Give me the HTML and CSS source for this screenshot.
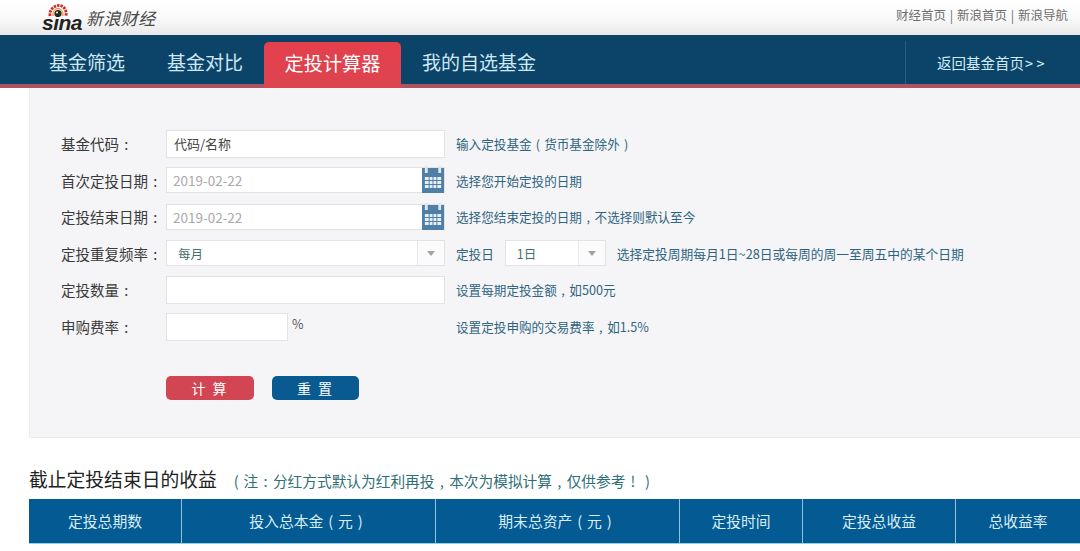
FILE: index.html
```html
<!DOCTYPE html>
<html lang="zh">
<head>
<meta charset="utf-8">
<title>定投计算器</title>
<link rel="stylesheet" href="styles.css">
</head>
<body>
<header class="top">
  <div class="brand">
    <span class="logo">
      <svg class="logo-eye" width="24" height="16" viewBox="0 0 24 16">
        <path d="M3 12 C2 5 8 1.500 12 1.500 C16 1.500 20 5 19 12" fill="none" stroke="#d8232a" stroke-width="2.800" stroke-dasharray="2.400 1"/>
        <path d="M6 12 C5.500 7 8 4.500 11 4.500 C14 4.500 16.500 7 16 12" fill="#f2d9a8" stroke="#e08a2a" stroke-width="1"/>
        <circle cx="11" cy="9.500" r="3.500" fill="#2a2a2a"/>
        <circle cx="10" cy="8.500" r="1" fill="#fff"/>
      </svg>
      <span class="logo-word">sina</span>
    </span>
    <span class="brand-name">新浪财经</span>
  </div>
  <nav class="top-links">财经首页 | 新浪首页 | 新浪导航</nav>
</header>

<nav class="nav">
  <a class="tab">基金筛选</a>
  <a class="tab">基金对比</a>
  <a class="tab active">定投计算器</a>
  <a class="tab">我的自选基金</a>
  <a class="back">返回基金首页<span class="back-arrows">&gt;&gt;</span></a>
</nav>

<main>
  <section class="panel">
    <div class="row">
      <label class="label">基金代码<span class="pc">:</span></label>
      <div class="control wide"><span class="value dark">代码/名称</span></div>
      <p class="hint">输入定投基金<span class="pc">(</span>货币基金除外<span class="pc">)</span></p>
    </div>
    <div class="row">
      <label class="label">首次定投日期<span class="pc">:</span></label>
      <div class="control wide date short">
        <span class="value muted">2019-02-22</span>
        <svg class="cal" width="22" height="27" viewBox="0 0 23 27" preserveAspectRatio="none">
          <rect x="0" y="2" width="23" height="25" fill="#4f7ea6"/>
          <rect x="3" y="0" width="3" height="7" fill="#dfe6ec"/>
          <rect x="17" y="0" width="3" height="7" fill="#dfe6ec"/>
          <g fill="#e6edf3">
            <rect x="3" y="11" width="4" height="3"/><rect x="8" y="11" width="3" height="3"/><rect x="12" y="11" width="3" height="3"/><rect x="16" y="11" width="4" height="3"/>
            <rect x="3" y="15" width="4" height="3"/><rect x="8" y="15" width="3" height="3"/><rect x="12" y="15" width="3" height="3"/><rect x="16" y="15" width="4" height="3"/>
            <rect x="3" y="19" width="4" height="3"/><rect x="8" y="19" width="3" height="3"/><rect x="12" y="19" width="3" height="3"/><rect x="16" y="19" width="4" height="3"/>
          </g>
        </svg>
      </div>
      <p class="hint">选择您开始定投的日期</p>
    </div>
    <div class="row">
      <label class="label">定投结束日期<span class="pc">:</span></label>
      <div class="control wide date short">
        <span class="value muted">2019-02-22</span>
        <svg class="cal" width="22" height="27" viewBox="0 0 23 27" preserveAspectRatio="none">
          <rect x="0" y="2" width="23" height="25" fill="#4f7ea6"/>
          <rect x="3" y="0" width="3" height="7" fill="#dfe6ec"/>
          <rect x="17" y="0" width="3" height="7" fill="#dfe6ec"/>
          <g fill="#e6edf3">
            <rect x="3" y="11" width="4" height="3"/><rect x="8" y="11" width="3" height="3"/><rect x="12" y="11" width="3" height="3"/><rect x="16" y="11" width="4" height="3"/>
            <rect x="3" y="15" width="4" height="3"/><rect x="8" y="15" width="3" height="3"/><rect x="12" y="15" width="3" height="3"/><rect x="16" y="15" width="4" height="3"/>
            <rect x="3" y="19" width="4" height="3"/><rect x="8" y="19" width="3" height="3"/><rect x="12" y="19" width="3" height="3"/><rect x="16" y="19" width="4" height="3"/>
          </g>
        </svg>
      </div>
      <p class="hint">选择您结束定投的日期<span class="pc">,</span>不选择则默认至今</p>
    </div>
    <div class="row">
      <label class="label">定投重复频率<span class="pc">:</span></label>
      <div class="control wide select short">
        <span class="value teal pad-more">每月</span>
        <span class="caret-box"><i class="caret"></i></span>
      </div>
      <p class="hint">定投日</p>
      <div class="control day select short">
        <span class="value teal pad-more">1日</span>
        <span class="caret-box"><i class="caret"></i></span>
      </div>
      <p class="hint long">选择定投周期每月1日~28日或每周的周一至周五中的某个日期</p>
    </div>
    <div class="row">
      <label class="label">定投数量<span class="pc">:</span></label>
      <div class="control wide"></div>
      <p class="hint">设置每期定投金额<span class="pc">,</span>如500元</p>
    </div>
    <div class="row">
      <label class="label">申购费率<span class="pc">:</span></label>
      <div class="control small"></div>
      <span class="percent">%</span>
      <p class="hint rate-hint">设置定投申购的交易费率<span class="pc">,</span>如1.5%</p>
    </div>
    <div class="actions">
      <button class="btn red">计 算</button>
      <button class="btn blue">重 置</button>
    </div>
  </section>

  <section class="result">
    <h2 class="result-title">截止定投结束日的收益<span class="note"><span class="pc">(</span>注<span class="pc">:</span>分红方式默认为红利再投<span class="pc">,</span>本次为模拟计算<span class="pc">,</span>仅供参考<span class="pc">!</span><span class="pc">)</span></span></h2>
    <div class="thead">
      <div class="th">定投总期数</div>
      <div class="th">投入总本金<span class="pc">(</span>元<span class="pc">)</span></div>
      <div class="th">期末总资产<span class="pc">(</span>元<span class="pc">)</span></div>
      <div class="th">定投时间</div>
      <div class="th">定投总收益</div>
      <div class="th">总收益率</div>
    </div>
  </section>
</main>
</body>
</html>
```
FILE: styles.css
```css
* { box-sizing: border-box; }
html, body { margin: 0; padding: 0; height: 100%; overflow: hidden; background: #fff; }
body { font-family: "Noto Sans CJK SC", "Liberation Sans", sans-serif; color: #333; }

.pc { display: inline-block; width: 1em; text-align: center; }

.top {
  height: 35px;
  display: flex;
  align-items: center;
  justify-content: space-between;
  padding: 0 12px 0 42px;
  background: linear-gradient(#ffffff 0%, #fafafa 50%, #e9e9e9 100%);
}
.brand { display: flex; align-items: center; gap: 6px; }
.logo { position: relative; display: block; width: 38px; height: 30px; }
.logo-eye { position: absolute; left: 5px; top: 1px; }
.logo-word {
  position: absolute;
  left: 0;
  bottom: -2px;
  font: italic bold 21px/24px "Liberation Sans", sans-serif;
  letter-spacing: -0.5px;
  color: #222;
}
.brand-name { font-size: 17px; font-style: italic; color: #4a4a4a; line-height: 30px; letter-spacing: 0.4px; }
.top-links { font-size: 12.500px; color: #6e6e6e; line-height: 16px; word-spacing: 1px; margin-top: -5px; }

.nav {
  height: 53px;
  display: flex;
  align-items: flex-end;
  padding-left: 28px;
  background: #0b4468;
  border-bottom: 4px solid #ad5461;
}
.tab {
  height: 43px;
  padding: 0 21px;
  font-size: 19px;
  line-height: 41px;
  color: #cfe8f4;
}
.tab.active {
  width: 137px;
  padding: 0;
  text-align: center;
  font-size: 19.200px;
  margin: 0 0 -4px 0;
  height: 46px;
  line-height: 43px;
  color: #fff;
  background: linear-gradient(#e4404c, #dc4450);
  border-radius: 5px 5px 0 0;
}
.back {
  margin-left: auto;
  height: 43px;
  width: 175px;
  padding-left: 31px;
  border-left: 1px solid #2a5b7b;
  font-size: 14.500px;
  line-height: 43px;
  color: #d2ecf7;
  white-space: nowrap;
}
.back-arrows { letter-spacing: 3.500px; margin-left: 1px; }

.panel {
  margin-left: 29px;
  height: 350px;
  padding: 41.600px 0 0 31px;
  background: #f5f5f7;
  border-left: 1px solid #ececee;
  border-bottom: 1px solid #ececee;
  display: flex;
  flex-direction: column;
  gap: 8.600px;
}
.row { display: flex; align-items: center; height: 28px; }
.label { width: 105px; font-size: 14.500px; color: #3a3a3a; white-space: nowrap; flex: none; }
.control {
  height: 28px;
  background: #fff;
  border: 1px solid #e3e3e6;
  display: flex;
  align-items: center;
  position: relative;
  flex: none;
}
.control.short { height: 26px; }
.wide { width: 279px; }
.small { width: 122px; }
.day { width: 101px; margin-left: 11px; }
.value { padding-left: 7px; font-size: 13px; }
.pad-more { padding-left: 11px; font-size: 12.500px; }
.dark { color: #444; }
.muted { color: #aaaaaa; font-size: 13.500px; padding-left: 6px; }
.teal { color: #44706f; }
.cal { position: absolute; right: 0; top: -2px; }
.select { padding-right: 27px; }
.caret-box {
  position: absolute;
  right: 0;
  top: 0;
  bottom: 0;
  width: 27px;
  background: #fbfbfb;
  border-left: 1px solid #e8e8ea;
  display: flex;
  align-items: center;
  justify-content: center;
}
.caret {
  width: 0;
  height: 0;
  border-left: 4px solid transparent;
  border-right: 4px solid transparent;
  border-top: 5px solid #a3a3a3;
}
.hint { margin: 0 0 0 11px; font-size: 12.600px; color: #2f6480; white-space: nowrap; }
.hint.long { font-size: 12.750px; }
.percent { margin: -6px 0 0 4px; width: 164px; font-size: 12.500px; color: #555; flex: none; }
.hint.rate-hint { margin-left: 0; }

.actions { display: flex; gap: 18px; margin: 26.400px 0 0 105px; }
.btn {
  height: 24px;
  width: 88px;
  padding: 0;
  border: 0;
  border-radius: 5px;
  color: #fff;
  font-family: inherit;
  font-size: 14px;
  line-height: 24px;
  letter-spacing: 2px;
}
.btn.red { background: #d24552; }
.btn.blue { width: 87px; background: #0a5a92; }

.result { margin-left: 29px; padding-top: 26px; }
.result-title {
  margin: 0;
  height: 35px;
  font-size: 18.800px;
  font-weight: 400;
  line-height: 30px;
  color: #222;
  white-space: nowrap;
}
.note { font-size: 14.700px; margin-left: 12px; color: #2f6f78; }
.thead {
  height: 45px;
  display: grid;
  grid-template-columns: 152px 254px 244px 123px 153px 125px;
  background: #045a92;
  border-bottom: 1px solid #8fd0ea;
}
.th {
  display: flex;
  align-items: center;
  justify-content: center;
  padding-bottom: 2px;
  font-size: 14.800px;
  color: #d8eef8;
  border-left: 1px solid #8fc4df;
}
.th:first-child { border-left: 0; }
```
